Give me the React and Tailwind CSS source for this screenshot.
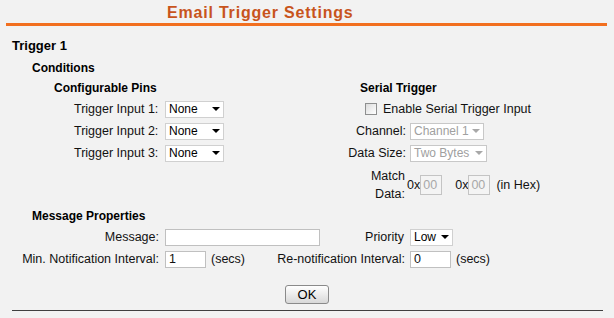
import React from 'react';

function Arrow({ disabled }) {
  return (
    <span
      className={
        disabled
          ? 'w-0 h-0 shrink-0 border-x-[4px] border-x-transparent border-t-[4px] border-t-[#a8a8a8]'
          : 'w-0 h-0 shrink-0 border-x-[4px] border-x-transparent border-t-[4px] border-t-black'
      }
    />
  );
}

function Select({ value, className, disabled }) {
  return (
    <div
      className={
        'h-[17px] flex items-center justify-between bg-white border pl-[3px] pr-[3px] text-[12px] ' +
        (disabled ? 'border-[#c8c8c8] text-[#a0a0a0] ' : 'border-[#d0d0d0] text-black ') +
        className
      }
    >
      <span className="leading-[15px] whitespace-nowrap">{value}</span>
      <Arrow disabled={disabled} />
    </div>
  );
}

function TextBox({ value, className }) {
  return (
    <div className={'h-[17px] bg-white border border-[#c0c0c0] pl-[3px] leading-[15px] ' + className}>
      {value}
    </div>
  );
}

function HexBox() {
  return (
    <div className="w-[22px] h-[20px] border border-[#c4c4c4] bg-[#f4f4f4] text-[#a8a8a8] pl-[2px] leading-[18px]">
      00
    </div>
  );
}

export default function App() {
  const pins = ['Trigger Input 1:', 'Trigger Input 2:', 'Trigger Input 3:'];

  return (
    <div
      className="w-[614px] h-[318px] bg-[#f2f2f2] text-[12.5px] text-[#111] overflow-hidden"
      style={{ fontFamily: '"Liberation Sans", Arial, sans-serif' }}
    >
      {/* Title */}
      <div className="ml-[6px] mr-[7px] h-[26px] border-b-[3px] border-[#f26f1f]">
        <div className="pl-[161px] leading-[25px] text-[16px] font-bold tracking-[0.8px] text-[#c8541c]">
          Email Trigger Settings
        </div>
      </div>

      {/* Trigger 1 */}
      <div className="mt-[10px] pl-[12px] leading-[20px] text-[13px] font-bold text-black">Trigger 1</div>

      {/* Conditions */}
      <div className="mt-[2px] pl-[32px] leading-[20px] text-[12px] font-bold text-black">Conditions</div>

      <div className="flex pl-[54px] h-[126px]">
        {/* Configurable Pins */}
        <div className="w-[286px]">
          <div className="leading-[20px] text-[12px] font-bold text-black">Configurable Pins</div>
          {pins.map((p) => (
            <div key={p} className="h-[22px] flex items-center pl-[20px]">
              <span className="w-[91px]">{p}</span>
              <Select value="None" className="w-[59px]" />
            </div>
          ))}
        </div>

        {/* Serial Trigger */}
        <div className="flex-1">
          <div className="pl-[20px] leading-[20px] text-[12px] font-bold text-black">Serial Trigger</div>
          <div className="h-[22px] flex items-center pl-[25px] gap-[6px]">
            <div className="w-[12px] h-[12px] border border-[#8e8f8f] bg-gradient-to-br from-[#dcdcdc] to-white" />
            <span>Enable Serial Trigger Input</span>
          </div>
          <div className="h-[22px] flex items-center">
            <span className="w-[66px] text-right">Channel:</span>
            <Select value="Channel 1" disabled className="ml-[4px] w-[74px]" />
          </div>
          <div className="h-[22px] flex items-center">
            <span className="w-[66px] text-right">Data Size:</span>
            <Select value="Two Bytes" disabled className="ml-[4px] w-[77px]" />
          </div>
          <div className="mt-[3px] flex items-center">
            <div className="w-[65px] text-right leading-[18px]">
              Match
              <br />
              Data:
            </div>
            <span className="ml-[2px]">0x</span>
            <HexBox />
            <span className="ml-[13px]">0x</span>
            <HexBox />
            <span className="ml-[6px]">(in Hex)</span>
          </div>
        </div>
      </div>

      {/* Message Properties */}
      <div className="mt-[2px] pl-[32px] leading-[20px] text-[12px] font-bold text-black">Message Properties</div>

      <div className="flex items-center h-[22px]">
        <span className="w-[159px] text-right">Message:</span>
        <div className="w-[247px] flex items-center">
          <TextBox value="" className="ml-[6px] w-[155px]" />
          <span className="ml-auto pr-[2px]">Priority</span>
        </div>
        <Select value="Low" className="ml-[4px] w-[43px]" />
      </div>
      <div className="flex items-center h-[22px]">
        <span className="w-[159px] text-right">Min. Notification Interval:</span>
        <div className="w-[247px] flex items-center">
          <TextBox value="1" className="ml-[6px] w-[41px]" />
          <span className="ml-[5px]">(secs)</span>
          <span className="ml-auto pr-[1px]">Re-notification Interval:</span>
        </div>
        <TextBox value="0" className="ml-[4px] w-[41px]" />
        <span className="ml-[5px]">(secs)</span>
      </div>

      {/* OK */}
      <div className="mt-[15px] flex pl-[285px]">
        <button className="w-[44px] h-[19px] rounded-[3px] border border-[#8a8a8a] bg-gradient-to-b from-white to-[#d8d8d8] text-[13px] leading-[17px] text-black">
          OK
        </button>
      </div>

      <div className="mt-[6px] ml-[12px] w-[591px] border-t border-[#404040]" />
    </div>
  );
}
